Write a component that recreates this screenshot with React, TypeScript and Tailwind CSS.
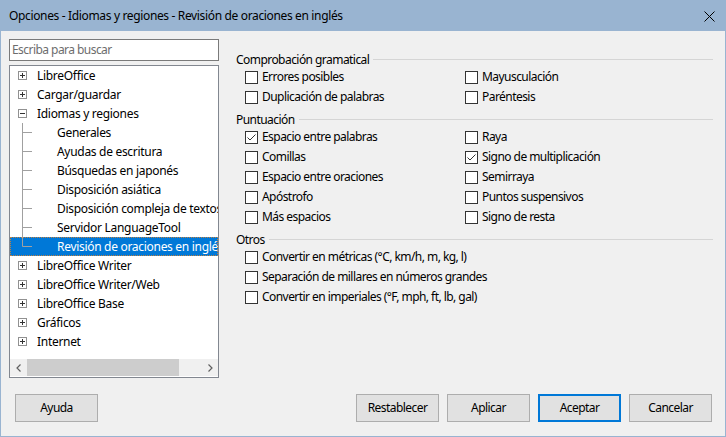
import React from 'react';

const font = "font-['Noto_Sans',sans-serif]";

type TreeItem = { label: string; level: 0 | 1; state?: 'plus' | 'minus'; last?: boolean; selected?: boolean };

const tree: TreeItem[] = [
  { label: 'LibreOffice', level: 0, state: 'plus' },
  { label: 'Cargar/guardar', level: 0, state: 'plus' },
  { label: 'Idiomas y regiones', level: 0, state: 'minus' },
  { label: 'Generales', level: 1 },
  { label: 'Ayudas de escritura', level: 1 },
  { label: 'Búsquedas en japonés', level: 1 },
  { label: 'Disposición asiática', level: 1 },
  { label: 'Disposición compleja de textos', level: 1 },
  { label: 'Servidor LanguageTool', level: 1 },
  { label: 'Revisión de oraciones en inglés', level: 1, last: true, selected: true },
  { label: 'LibreOffice Writer', level: 0, state: 'plus' },
  { label: 'LibreOffice Writer/Web', level: 0, state: 'plus' },
  { label: 'LibreOffice Base', level: 0, state: 'plus' },
  { label: 'Gráficos', level: 0, state: 'plus' },
  { label: 'Internet', level: 0, state: 'plus' },
];

function Expander({ minus }: { minus?: boolean }) {
  return (
    <svg width="9" height="9" viewBox="0 0 9 9" className="shrink-0">
      <rect x="0.5" y="0.5" width="8" height="8" fill="#fff" stroke="#919191" />
      <line x1="2" y1="4.5" x2="7" y2="4.5" stroke="#333" />
      {!minus && <line x1="4.5" y1="2" x2="4.5" y2="7" stroke="#333" />}
    </svg>
  );
}

function TreeRow({ item }: { item: TreeItem }) {
  if (item.level === 0) {
    return (
      <div className="flex h-[19px] items-center whitespace-nowrap pl-[8px]">
        <Expander minus={item.state === 'minus'} />
        <span className="ml-[10px]">{item.label}</span>
      </div>
    );
  }
  return (
    <div
      className={
        'flex h-[19px] items-center whitespace-nowrap ' +
        (item.selected ? 'bg-[#0078d7] text-white outline-1 outline-dotted outline-[#c08040] -outline-offset-1' : '')
      }
    >
      <svg width="30" height="19" viewBox="0 0 30 19" className="shrink-0">
        <line x1="12.5" y1="0" x2="12.5" y2={item.last ? 9.5 : 19} stroke="#a0a0a0" />
        <line x1="12.5" y1="9.5" x2="22" y2="9.5" stroke="#a0a0a0" />
      </svg>
      <span className="ml-[17px]">{item.label}</span>
    </div>
  );
}

function Checkbox({ label, checked }: { label: string; checked?: boolean }) {
  return (
    <div className="flex h-5 items-center whitespace-nowrap">
      <svg width="13" height="13" viewBox="0 0 13 13" className="shrink-0">
        <rect x="0.5" y="0.5" width="12" height="12" fill="#fff" stroke="#333" />
        {checked && <path d="M2.5 6.5 L5 9 L10.5 3.5" fill="none" stroke="#333" strokeWidth="1" />}
      </svg>
      <span className="ml-[4px]">{label}</span>
    </div>
  );
}

function Section({ title, className, children }: { title: string; className?: string; children: React.ReactNode }) {
  return (
    <div className={className}>
      <div className="flex h-[15px] items-center">
        <span className="whitespace-nowrap">{title}</span>
        <div className="ml-[4px] h-px flex-1 bg-[#d5d5d5]" />
      </div>
      <div className="pl-[9px]">{children}</div>
    </div>
  );
}

function Button({ label, primary }: { label: string; primary?: boolean }) {
  return (
    <button
      className={
        'flex h-[28px] w-[83px] items-center justify-center bg-[#e1e1e1] ' +
        (primary ? 'border-2 border-[#0078d7]' : 'border border-[#adadad]')
      }
    >
      {label}
    </button>
  );
}

export default function App() {
  return (
    <div className={`flex h-[437px] w-[726px] flex-col border border-[#99b4d1] bg-[#f0f0f0] text-[12px] tracking-[-0.55px] text-black ${font}`}>
      <div className="flex h-[30px] shrink-0 items-center justify-between bg-[#99b4d1] pl-[8px] pr-[10px]">
        <span className="tracking-[-0.35px]">Opciones - Idiomas y regiones - Revisión de oraciones en inglés</span>
        <svg width="11" height="11" viewBox="0 0 11 11">
          <path d="M0.5 0.5 L10.5 10.5 M10.5 0.5 L0.5 10.5" stroke="#000" strokeWidth="1" />
        </svg>
      </div>

      <div className="flex">
        <div className="ml-[8px] flex w-[210px] shrink-0 flex-col pt-[8px]">
          <div className="flex h-[22px] items-center border border-[#7a7a7a] bg-white pl-[2px] text-[#6d6d6d]">
            Escriba para buscar
          </div>
          <div className="mt-[4px] flex h-[313px] flex-col overflow-hidden border border-[#828790] bg-white tracking-[-0.3px]">
            <div className="flex-1">
              {tree.map((item) => (
                <TreeRow key={item.label} item={item} />
              ))}
            </div>
            <div className="mb-[1px] flex h-[17px] shrink-0 items-center bg-[#f0f0f0]">
              <div className="flex w-[17px] items-center justify-center">
                <svg width="6" height="8" viewBox="0 0 6 8">
                  <path d="M4.5 0.5 L1 4 L4.5 7.5" fill="none" stroke="#606060" strokeWidth="1.2" />
                </svg>
              </div>
              <div className="h-[17px] w-[152px] bg-[#cdcdcd]" />
              <div className="flex-1" />
              <div className="flex w-[17px] items-center justify-center">
                <svg width="6" height="8" viewBox="0 0 6 8">
                  <path d="M1.5 0.5 L5 4 L1.5 7.5" fill="none" stroke="#606060" strokeWidth="1.2" />
                </svg>
              </div>
            </div>
          </div>
        </div>

        <div className="ml-[17px] mr-[12px] flex-1 pt-[21px]">
          <Section title="Comprobación gramatical">
            <div className="grid grid-cols-[220px_1fr]">
              <Checkbox label="Errores posibles" />
              <Checkbox label="Mayusculación" />
              <Checkbox label="Duplicación de palabras" />
              <Checkbox label="Paréntesis" />
            </div>
          </Section>
          <Section title="Puntuación" className="mt-[5px]">
            <div className="grid grid-cols-[220px_1fr]">
              <Checkbox label="Espacio entre palabras" checked />
              <Checkbox label="Raya" />
              <Checkbox label="Comillas" />
              <Checkbox label="Signo de multiplicación" checked />
              <Checkbox label="Espacio entre oraciones" />
              <Checkbox label="Semirraya" />
              <Checkbox label="Apóstrofo" />
              <Checkbox label="Puntos suspensivos" />
              <Checkbox label="Más espacios" />
              <Checkbox label="Signo de resta" />
            </div>
          </Section>
          <Section title="Otros" className="mt-[5px]">
            <Checkbox label="Convertir en métricas (°C, km/h, m, kg, l)" />
            <Checkbox label="Separación de millares en números grandes" />
            <Checkbox label="Convertir en imperiales (°F, mph, ft, lb, gal)" />
          </Section>
        </div>
      </div>

      <div className="mt-[16px] flex pl-[14px] pr-[13px]">
        <Button label="Ayuda" />
        <div className="flex-1" />
        <div className="flex gap-[8px]">
          <Button label="Restablecer" />
          <Button label="Aplicar" />
          <Button label="Aceptar" primary />
          <Button label="Cancelar" />
        </div>
      </div>
    </div>
  );
}
